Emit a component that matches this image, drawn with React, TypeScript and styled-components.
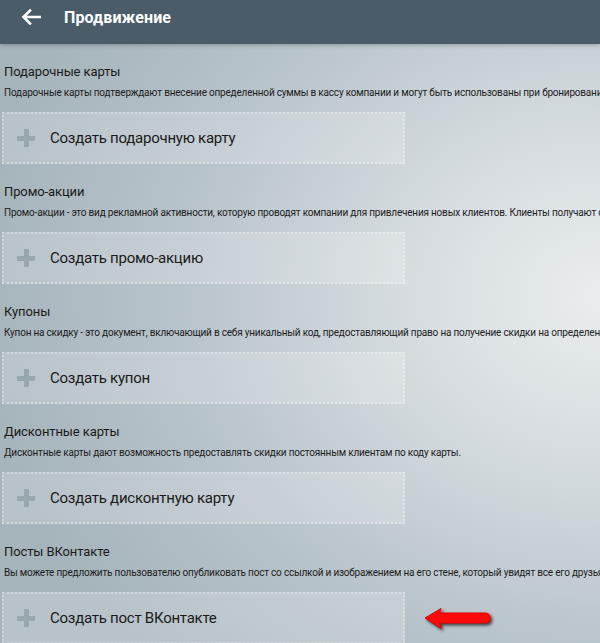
import React from "react";
import styled, { createGlobalStyle } from "styled-components";

type Promo = {
  title: string;
  description: string;
  action: string;
  pointed?: boolean;
};

const promos: Promo[] = [
  {
    title: "Подарочные карты",
    description:
      "Подарочные карты подтверждают внесение определенной суммы в кассу компании и могут быть использованы при бронировании услуг.",
    action: "Создать подарочную карту",
  },
  {
    title: "Промо-акции",
    description:
      "Промо-акции - это вид рекламной активности, которую проводят компании для привлечения новых клиентов. Клиенты получают скидку.",
    action: "Создать промо-акцию",
  },
  {
    title: "Купоны",
    description:
      "Купон на скидку - это документ, включающий в себя уникальный код, предоставляющий право на получение скидки на определенные услуги.",
    action: "Создать купон",
  },
  {
    title: "Дисконтные карты",
    description:
      "Дисконтные карты дают возможность предоставлять скидки постоянным клиентам по коду карты.",
    action: "Создать дисконтную карту",
  },
  {
    title: "Посты ВКонтакте",
    description:
      "Вы можете предложить пользователю опубликовать пост со ссылкой и изображением на его стене, который увидят все его друзья.",
    action: "Создать пост ВКонтакте",
    pointed: true,
  },
];

const App = () => {
  return (
    <>
      <GlobalStyle />
      <Page>
        <Header>
          <BackButton>
            <svg width="20" height="16" viewBox="0 0 20 16">
              <path
                d="M19 8H3M9 1.5L2.5 8L9 14.5"
                fill="none"
                stroke="#ffffff"
                strokeWidth="2.6"
                strokeLinecap="square"
              />
            </svg>
          </BackButton>
          <HeaderTitle>Продвижение</HeaderTitle>
        </Header>
        <Content>
          {promos.map((promo) => (
            <Section key={promo.title}>
              <SectionTitle>{promo.title}</SectionTitle>
              <Description>{promo.description}</Description>
              <ActionRow>
                <CreateButton>
                  <PlusIcon />
                  {promo.action}
                </CreateButton>
                {promo.pointed ? (
                  <Pointer>
                    <svg width="72" height="30" viewBox="0 0 72 30">
                      <path
                        d="M3 14 L19 4.5 L17.5 9 L63 9 Q68 9 68 14 Q68 19 63 19 L17.5 19 L19 24.5 Z"
                        fill="#ff0a0a"
                        stroke="#e60000"
                        strokeWidth="1"
                        strokeLinejoin="round"
                      />
                    </svg>
                  </Pointer>
                ) : null}
              </ActionRow>
            </Section>
          ))}
        </Content>
      </Page>
    </>
  );
};

export default App;

const GlobalStyle = createGlobalStyle`
  html, body {
    margin: 0;
    padding: 0;
  }
  body {
    font-family: Roboto, "Liberation Sans", sans-serif;
    color: #1c1c1c;
  }
`;

const Page = styled.div`
  width: 600px;
  height: 643px;
  overflow: hidden;
  background: radial-gradient(
    ellipse 620px 520px at 100% 46%,
    #e9edef 0%,
    #d3dade 35%,
    #bac5cc 65%,
    #a6b4bc 100%
  );
`;

const Header = styled.div`
  position: relative;
  z-index: 1;
  display: flex;
  align-items: center;
  height: 44px;
  padding-left: 21px;
  padding-bottom: 10px;
  box-sizing: border-box;
  background: #4a5c67;
  box-shadow: 0 1px 4px #00000040;
`;

const BackButton = styled.div`
  display: flex;
  align-items: center;
  width: 20px;
  height: 16px;
  margin-right: 23px;
`;

const HeaderTitle = styled.div`
  font-size: 16px;
  font-weight: 700;
  color: #ffffff;
  letter-spacing: 0.1px;
`;

const Content = styled.div`
  display: flex;
  flex-direction: column;
  padding: 20px 0 0 2px;
`;

const Section = styled.div`
  display: flex;
  flex-direction: column;
  margin-bottom: 20px;
`;

const SectionTitle = styled.div`
  font-size: 13px;
  line-height: 16px;
  margin-left: 2px;
  letter-spacing: -0.1px;
  color: #1a1a1a;
`;

const Description = styled.div`
  margin-top: 6px;
  margin-left: 2px;
  font-size: 10px;
  line-height: 14px;
  letter-spacing: -0.2px;
  white-space: nowrap;
  color: #1c1c1c;
`;

const ActionRow = styled.div`
  display: flex;
  align-items: center;
  margin-top: 12px;
`;

const CreateButton = styled.div`
  display: flex;
  align-items: center;
  width: 403px;
  height: 52px;
  box-sizing: border-box;
  padding-left: 13px;
  border: 2px dotted #ffffff55;
  background: #ffffff33;
  font-size: 15px;
  letter-spacing: -0.25px;
  color: #1a1a1a;
  cursor: pointer;
`;

const PlusIcon = styled.div`
  position: relative;
  width: 18px;
  height: 18px;
  margin-right: 15px;
  flex-shrink: 0;
  &::before,
  &::after {
    content: "";
    position: absolute;
    background: #98a6ae;
  }
  &::before {
    left: 0;
    top: 6.5px;
    width: 18px;
    height: 5px;
  }
  &::after {
    left: 6.5px;
    top: 0;
    width: 5px;
    height: 18px;
  }
`;

const Pointer = styled.div`
  display: flex;
  margin-left: 17px;
  margin-top: 2px;
  filter: drop-shadow(2px 2px 1.5px #000000aa);
`;
